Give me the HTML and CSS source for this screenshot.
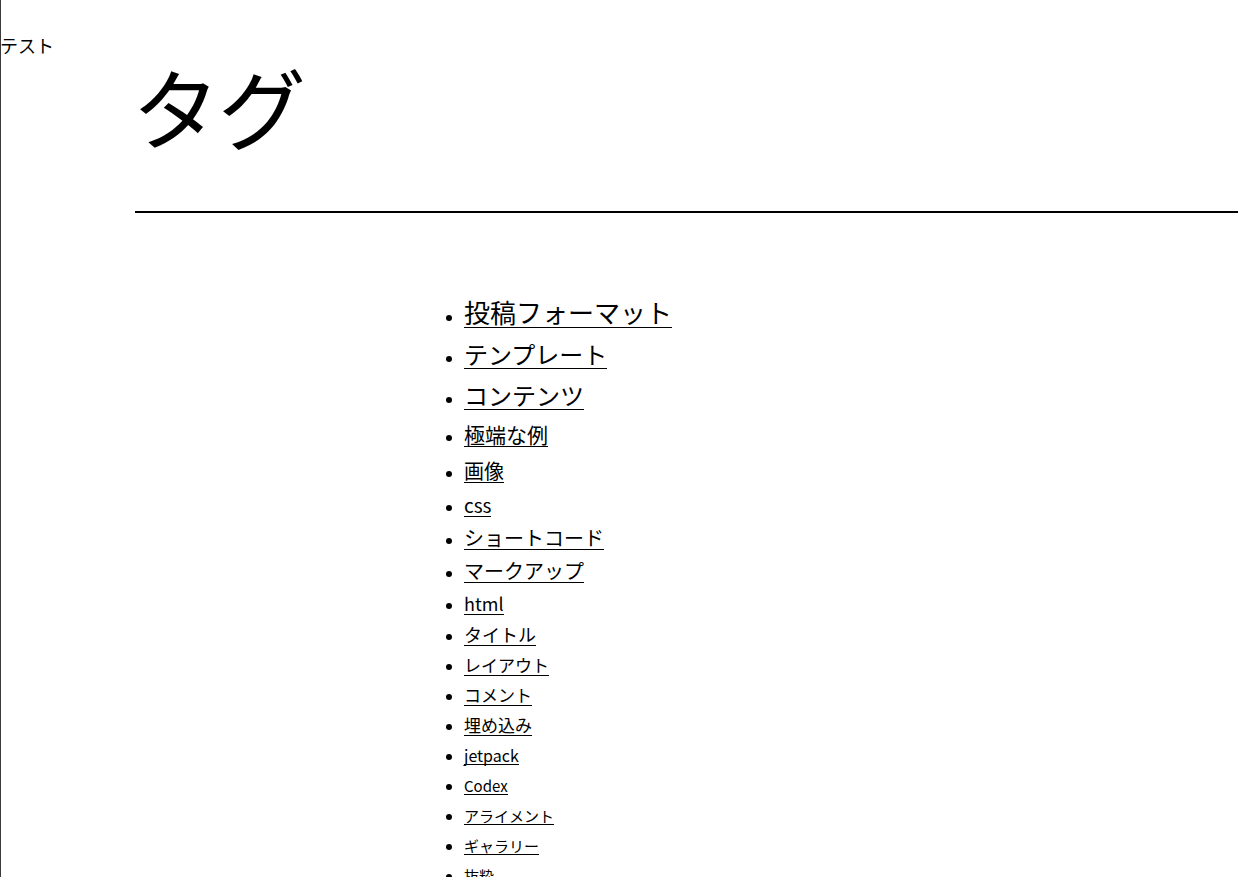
FILE: index.html
```html
<!DOCTYPE html>
<html lang="ja">
<head>
<meta charset="utf-8">
<title>タグ</title>
<link rel="stylesheet" href="styles.css">
</head>
<body>
<div class="page">
  <div class="site-title">テスト</div>
  <main class="main">
    <h1 class="page-title">タグ</h1>
    <hr class="rule">
    <ul class="tag-list">
      <li class="t1"><a href="#">投稿フォーマット</a></li>
      <li class="t2"><a href="#">テンプレート</a></li>
      <li class="t2"><a href="#">コンテンツ</a></li>
      <li class="t3"><a href="#">極端な例</a></li>
      <li class="t4"><a href="#">画像</a></li>
      <li class="t5"><a href="#">css</a></li>
      <li class="t6"><a href="#">ショートコード</a></li>
      <li class="t6"><a href="#">マークアップ</a></li>
      <li class="t7"><a href="#">html</a></li>
      <li class="t8"><a href="#">タイトル</a></li>
      <li class="t9"><a href="#">レイアウト</a></li>
      <li class="t9"><a href="#">コメント</a></li>
      <li class="t9"><a href="#">埋め込み</a></li>
      <li class="t10"><a href="#">jetpack</a></li>
      <li class="t11"><a href="#">Codex</a></li>
      <li class="t11"><a href="#">アライメント</a></li>
      <li class="t11"><a href="#">ギャラリー</a></li>
      <li class="t11"><a href="#">抜粋</a></li>
    </ul>
  </main>
</div>
</body>
</html>
```
FILE: styles.css
```css
html, body {
  margin: 0;
  padding: 0;
  background: #fff;
}
body {
  font-family: "Noto Sans CJK JP", "Noto Sans", sans-serif;
  color: #000;
  overflow: hidden;
}
.page {
  min-height: 100vh;
  border-left: 1px solid #3a3a3a;
  box-sizing: border-box;
}
.site-title {
  padding-top: 33px;
  font-size: 18px;
  line-height: 24px;
  margin-left: -1px;
}
.main {
  margin-left: 134px;
}
.page-title {
  margin: 0;
  padding-top: 0;
  font-size: 88px;
  font-weight: normal;
  line-height: 96px;
  letter-spacing: -2px;
  margin-left: -3px;
}
.rule {
  margin: 58px 0 0 0;
  border: 0;
  height: 2px;
  background: #000;
}
.tag-list {
  margin: 78px 0 0 0;
  padding-left: 329px;
  list-style: disc;
}
.tag-list li::marker {
  font-size: 15px;
}
.tag-list a {
  display: inline-block;
  color: #000;
  text-decoration: none;
  line-height: 1.15;
  border-bottom: 1px solid #000;
}
.t1 { font-size: 26px; line-height: 42px; }
.t2 { font-size: 24px; line-height: 41px; }
.t3 { font-size: 21px; line-height: 38px; }
.t4 { font-size: 20px; line-height: 35px; }
.t5 { font-size: 19px; line-height: 33px; }
.t6 { font-size: 20px; line-height: 33px; }
.t7 { font-size: 18px; line-height: 32px; }
.t8 { font-size: 18px; line-height: 31px; }
.t9 { font-size: 17px; line-height: 30px; }
.t10 { font-size: 16px; line-height: 31px; }
.t11 { font-size: 15px; line-height: 30px; }
```
